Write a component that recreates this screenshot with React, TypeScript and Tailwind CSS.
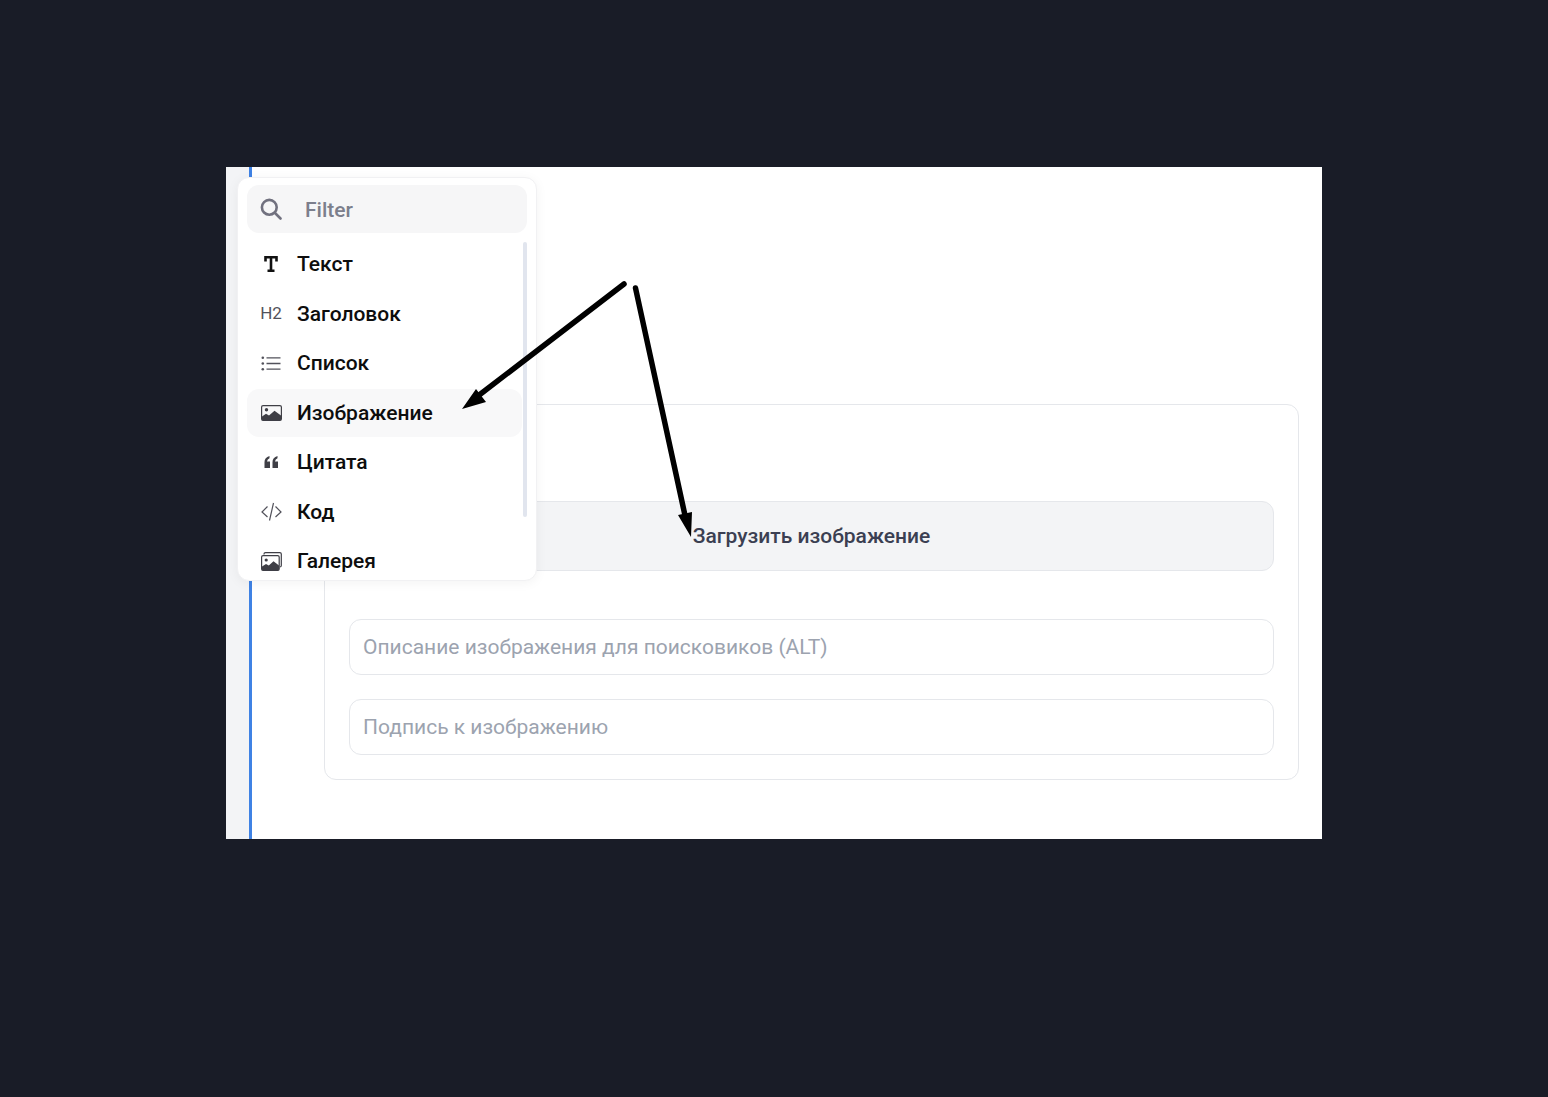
import type { ReactNode } from "react";

function SearchIcon() {
  return (
    <svg width="22" height="22" viewBox="0 0 22 22" fill="none" stroke="#71717f" strokeWidth="2.6" strokeLinecap="round">
      <circle cx="9.300" cy="9.300" r="7.400" />
      <path d="M15 15 20.500 20.500" />
    </svg>
  );
}

function ImageIcon() {
  return (
    <svg width="21" height="16" viewBox="0 0 21 16">
      <rect x="0.6" y="0.6" width="19.8" height="14.8" rx="1.5" fill="none" stroke="#3f3f46" strokeWidth="1.2" />
      <circle cx="5.5" cy="4.8" r="1.7" fill="#3f3f46" />
      <path d="M1 14.5V11.5L5 8.8 8 10.5 13.5 5.8 20 10.500V14.5Q20 15.5 19 15.5H2Q1 15.5 1 14.5Z" fill="#3f3f46" />
    </svg>
  );
}

function GalleryIcon() {
  return (
    <svg width="21" height="19" viewBox="0 0 21 19">
      <path d="M3 2.500V2Q3 0.7 4.500 0.700H18.800Q20.300 0.700 20.300 2V13.500Q20.300 15 18.800 15" fill="none" stroke="#3f3f46" strokeWidth="1.2" />
      <rect x="0.6" y="3.600" width="17.600" height="14.800" rx="1.5" fill="#ffffff" stroke="#3f3f46" strokeWidth="1.2" />
      <circle cx="5.2" cy="8" r="1.6" fill="#3f3f46" />
      <path d="M1 17.500V14.500L5 12 7.800 13.600 12.500 9.200 18 13.500V17.500Q18 18.500 17 18.500H2Q1 18.500 1 17.500Z" fill="#3f3f46" />
    </svg>
  );
}

function TextIcon() {
  return (
    <svg width="14" height="16" viewBox="0 0 14 16">
      <path d="M1.500 5.500V1.300H12.500V5.500M7 1.300V14.700M3.500 14.700H10.500" fill="none" stroke="#111111" strokeWidth="2.6" />
    </svg>
  );
}

function ListIcon() {
  return (
    <svg width="20" height="15" viewBox="0 0 20 15" stroke="#52525b">
      <circle cx="1.800" cy="1.800" r="1.300" fill="#52525b" stroke="none" />
      <circle cx="1.800" cy="7.500" r="1.300" fill="#52525b" stroke="none" />
      <circle cx="1.800" cy="13.200" r="1.300" fill="#52525b" stroke="none" />
      <path d="M5.500 1.800H19.500M5.500 7.500H19.500M5.500 13.200H19.500" strokeWidth="1.300" />
    </svg>
  );
}

function QuoteIcon() {
  return (
    <svg width="14" height="12" viewBox="0 0 14 12" fill="#3f3f46">
      <path d="M0.500 12V6Q0.500 1.500 5.500 0V2.200Q3.300 3 3 5.500H6V12ZM8.500 12V6Q8.500 1.500 13.500 0V2.200Q11.300 3 11 5.500H14V12Z" />
    </svg>
  );
}

function CodeIcon() {
  return (
    <svg width="21" height="19" viewBox="0 0 21 19" fill="none" stroke="#52525b" strokeWidth="1.200">
      <path d="M6.500 4.500 1 10 6.500 15M14.500 4.500 20 10 14.500 15M12.500 1 8.500 18.500" />
    </svg>
  );
}

const items: { label: string; icon: ReactNode; active?: boolean }[] = [
  { label: "Текст", icon: <TextIcon /> },
  { label: "Заголовок", icon: <span className="text-[17px] text-[#52525b]">H2</span> },
  { label: "Список", icon: <ListIcon /> },
  { label: "Изображение", icon: <ImageIcon />, active: true },
  { label: "Цитата", icon: <QuoteIcon /> },
  { label: "Код", icon: <CodeIcon /> },
  { label: "Галерея", icon: <GalleryIcon /> },
];

function BlockMenu() {
  return (
    <div className="absolute left-[11px] top-[10px] h-[404px] w-[300px] overflow-hidden rounded-xl border border-[#f1f1f3] bg-white px-[9px] pt-[7px] shadow-[0_2px_12px_rgba(0,0,0,0.05)]">
      <div className="flex h-[48px] w-[280px] items-center rounded-xl bg-[#f6f6f7] pl-[13px]">
        <SearchIcon />
        <span className="ml-[23px] pt-[3px] text-[21px] font-medium text-[#7c7f8c]">Filter</span>
      </div>
      <div className="relative mt-[7px]">
        <div className="absolute right-0 top-[2px] h-[275px] w-[4px] rounded bg-[#e1e5ee]" />
        {items.map((item) => (
          <div
            key={item.label}
            className={`mb-[1.5px] flex h-[48px] w-[275px] items-center rounded-xl ${item.active ? "bg-[#f8f8f9]" : ""}`}
          >
            <span className="flex w-[50px] justify-center pr-[2px]">{item.icon}</span>
            <span className="pt-[2px] text-[21px] font-[475] text-[#0d0d0d]">{item.label}</span>
          </div>
        ))}
      </div>
    </div>
  );
}

function Arrows() {
  return (
    <svg className="pointer-events-none absolute left-0 top-0" width="1096" height="672" viewBox="226 167 1096 672">
      <path d="M624 284 474 399M635.500 288 686 520" fill="none" stroke="#000" strokeWidth="5.500" strokeLinecap="round" />
      <path d="M462 409 476 389 486 402ZM691 537 678 515 692 512Z" fill="#000" />
    </svg>
  );
}

export default function App() {
  return (
    <div className="min-h-screen bg-[#191c27] pt-[167px] font-['Roboto',sans-serif]">
      <div className="relative mx-auto flex h-[672px] w-[1096px] bg-white">
        <div className="w-[23px] bg-[#f3f4f6]" />
        <main className="w-[1073px] border-l-[3px] border-[#3f82e4] pl-[72px] pt-[237px]">
          <section className="flex h-[376px] w-[975px] flex-col gap-6 rounded-xl border border-[#e5e7eb] px-6 pt-[96px]">
            <button className="flex h-[70px] w-full shrink-0 items-center justify-center rounded-xl border border-[#e5e7eb] bg-[#f3f4f6] pt-[2px] text-[21px] font-[475] text-[#3b3f52]">
              Загрузить изображение
            </button>
            <div className="mt-[24px] flex h-[56px] shrink-0 items-center rounded-xl border border-[#e5e7eb] px-[13px] pt-[2px] text-[21px] text-[#9ca3af]">
              Описание изображения для поисковиков (ALT)
            </div>
            <div className="flex h-[56px] shrink-0 items-center rounded-xl border border-[#e5e7eb] px-[13px] pt-[2px] text-[21px] text-[#9ca3af]">
              Подпись к изображению
            </div>
          </section>
        </main>
        <BlockMenu />
        <Arrows />
      </div>
    </div>
  );
}
